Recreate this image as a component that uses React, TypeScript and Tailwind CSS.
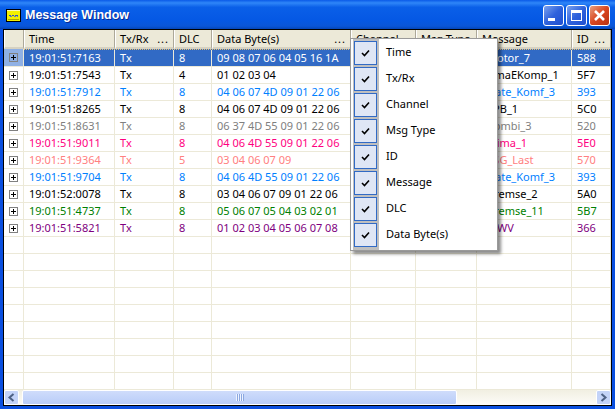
const rows = [
  ["19:01:51:7163", "8", "09 08 07 06 04 05 16 1A", "Motor_7", "588", "text-white", "pl-[10px]"],
  ["19:01:51:7543", "4", "01 02 03 04", "KlimaEKomp_1", "5F7", "text-black", "pl-[5px]"],
  ["19:01:51:7912", "8", "04 06 07 4D 09 01 22 06", "Gate_Komf_3", "393", "text-[#0080ff]", "pl-[10px]"],
  ["19:01:51:8265", "8", "04 06 07 4D 09 01 22 06", "EPB_1", "5C0", "text-black", "pl-[10px]"],
  ["19:01:51:8631", "8", "06 37 4D 55 09 01 22 06", "Kombi_3", "520", "text-[#808080]", "pl-[10px]"],
  ["19:01:51:9011", "8", "04 06 4D 55 09 01 22 06", "Klima_1", "5E0", "text-[#ff0080]", "pl-[10px]"],
  ["19:01:51:9364", "5", "03 04 06 07 09", "NSG_Last", "570", "text-[#ff8080]", "pl-[8px]"],
  ["19:01:51:9704", "8", "04 06 4D 55 09 01 22 06", "Gate_Komf_3", "393", "text-[#0080ff]", "pl-[10px]"],
  ["19:01:52:0078", "8", "03 04 06 07 09 01 22 06", "Bremse_2", "5A0", "text-black", "pl-[10px]"],
  ["19:01:51:4737", "8", "05 06 07 05 04 03 02 01", "Bremse_11", "5B7", "text-[#008000]", "pl-[10px]"],
  ["19:01:51:5821", "8", "01 02 03 04 05 06 07 08", "MWV", "366", "text-[#800080]", "pl-[10px]"],
];

const blanks = [0, 1, 2, 3, 4, 5, 6, 7, 8];
const menu = ["Time", "Tx/Rx", "Channel", "Msg Type", "ID", "Message", "DLC", "Data Byte(s)"];

function Head({ w, label, dots }: { w: string; label: string; dots?: boolean }) {
  return (
    <div className={`${w} shrink-0 flex items-center justify-between pl-[4px] pr-[4px] pt-[1px] h-full border-r border-r-[#aca899] border-l border-l-white border-b-2 border-b-[#d6d2c2] truncate`}>
      <span>{label}</span>
      {dots && <span className="tracking-[1px]">...</span>}
    </div>
  );
}

function Cell({ w, text, pad }: { w: string; text?: string; pad?: string }) {
  return (
    <div className={`${w} shrink-0 ${pad ?? "pl-[5px]"} h-full leading-[16px] whitespace-nowrap overflow-hidden border-r border-[#ece9d8]`}>
      {text}
    </div>
  );
}

function Plus({ selected }: { selected: boolean }) {
  return (
    <div className={`w-[20px] shrink-0 h-full flex items-center justify-center border-r border-[#ece9d8] ${selected ? "bg-[#8fb0e4]" : ""}`}>
      <svg width="9" height="9" viewBox="0 0 9 9" shapeRendering="crispEdges">
        <rect x="0.5" y="0.5" width="8" height="8" fill="none" stroke="#808080" />
        <path d="M2 4.5H7M4.5 2V7" stroke="#000" />
      </svg>
    </div>
  );
}

function WinButton({ kind }: { kind: "min" | "max" | "close" }) {
  const bg =
    kind === "close"
      ? "bg-[linear-gradient(135deg,#e8a080,#d9461f_50%,#b93210)]"
      : "bg-[linear-gradient(135deg,#7ba2ee,#2f62dc_50%,#1f4fd0)]";
  return (
    <div className={`w-[21px] h-[21px] rounded-[3px] border border-white flex items-center justify-center ${bg}`}>
      <svg width="15" height="15" viewBox="0 0 15 15" shapeRendering={kind === "close" ? "auto" : "crispEdges"}>
        {kind === "min" && <rect x="2" y="10" width="7" height="3" fill="#fff" />}
        {kind === "max" && (
          <>
            <rect x="2.5" y="2" width="10" height="10.5" fill="none" stroke="#fff" />
            <rect x="2" y="2" width="11" height="2.5" fill="#fff" />
          </>
        )}
        {kind === "close" && <path d="M3 3L12 12M12 3L3 12" stroke="#fff" strokeWidth="2.6" />}
      </svg>
    </div>
  );
}

function Arrow({ dir }: { dir: "l" | "r" }) {
  return (
    <div className="w-[15px] h-[15px] shrink-0 rounded-[2px] border border-white bg-[#c3d3f8] flex items-center justify-center">
      <svg width="9" height="9" viewBox="0 0 9 9">
        <path d={dir === "l" ? "M6.5 1L2.5 4.5L6.5 8" : "M2.5 1L6.5 4.5L2.5 8"} fill="none" stroke="#4d6185" strokeWidth="2" />
      </svg>
    </div>
  );
}

export default function App() {
  return (
    <div className="relative w-[615px] h-[409px] overflow-hidden flex flex-col bg-[#0a4fe0] text-[11px] text-black font-['Noto_Sans',sans-serif]">
      <div className="h-[29px] shrink-0 flex items-center pl-[6px] pr-[5px] pt-[2px] bg-[linear-gradient(180deg,#0a5ae8_0%,#2f86f8_10%,#0a5fe8_25%,#0558e4_70%,#0a56d8_90%,#0345b8_100%)]">
        <svg width="15" height="13" viewBox="0 0 15 13" shapeRendering="crispEdges" className="shrink-0">
          <rect x="0.5" y="0.5" width="14" height="12" rx="1" fill="#f4f000" stroke="#000" />
          <rect x="1" y="1" width="13" height="1" fill="#fffbb0" />
          <path d="M3 6h2M6 6h2M9 6h3" stroke="#3050c0" />
          <path d="M4 7h2M8 7h2M11 7h1" stroke="#5a7ad0" />
          <path d="M2 10h11" stroke="#b0a800" />
        </svg>
        <span className="ml-[4px] text-white font-bold text-[12.5px] font-['Liberation_Sans',sans-serif] [text-shadow:1px_1px_0_#0a2a90]">Message Window</span>
        <div className="ml-auto flex gap-[2px]">
          <WinButton kind="min" />
          <WinButton kind="max" />
          <WinButton kind="close" />
        </div>
      </div>

      <div className="flex-1 min-h-0 mx-[3px] mb-[3px] border border-black bg-white flex flex-col overflow-hidden">
        <div className="h-[19px] shrink-0 flex bg-[#ece9d8]">
          <Head w="w-[20px]" label="" />
          <Head w="w-[91px]" label="Time" />
          <Head w="w-[59px]" label="Tx/Rx" dots />
          <Head w="w-[38px]" label="DLC" />
          <Head w="w-[139px]" label="Data Byte(s)" dots />
          <Head w="w-[65px]" label="Channel" />
          <Head w="w-[61px]" label="Msg Type" />
          <Head w="w-[95px]" label="Message" />
          <Head w="w-[39px]" label="ID" dots />
        </div>
        <div className="flex-1 min-h-0 flex flex-col overflow-hidden">
          {rows.map((r, i) => (
            <div key={i} className={`${i === 0 ? "h-[18px]" : "h-[17px]"} shrink-0 flex border-b border-[#ece9d8] ${r[5]}`}>
              <Plus selected={i === 0} />
              <div className={`flex h-full ${i === 0 ? "bg-[#316ac5] border-t border-dotted border-t-[#e8c070]" : "bg-white"}`}>
                <Cell w="w-[91px]" text={r[0]} />
                <Cell w="w-[59px]" text="Tx" />
                <Cell w="w-[38px]" text={r[1]} />
                <Cell w="w-[139px]" text={r[2]} />
                <Cell w="w-[65px]" />
                <Cell w="w-[61px]" />
                <Cell w="w-[95px]" text={r[3]} pad={r[6]} />
                <Cell w="w-[39px]" text={r[4]} />
              </div>
            </div>
          ))}
          {blanks.map((b) => (
            <div key={b} className="h-[17px] shrink-0 flex border-b border-[#ece9d8]">
              <Cell w="w-[20px]" />
              <Cell w="w-[91px]" />
              <Cell w="w-[59px]" />
              <Cell w="w-[38px]" />
              <Cell w="w-[139px]" />
              <Cell w="w-[65px]" />
              <Cell w="w-[61px]" />
              <Cell w="w-[95px]" />
              <Cell w="w-[39px]" />
            </div>
          ))}
        </div>
        <div className="h-[15px] shrink-0 flex bg-[linear-gradient(180deg,#f1efe2,#fdfcf8)]">
          <Arrow dir="l" />
          <div className="ml-[3px] w-[435px] h-full rounded-[2px] border border-white bg-[linear-gradient(180deg,#cfdcfb,#b9cdf8)] flex items-center justify-center">
            <svg width="8" height="7" viewBox="0 0 8 7" shapeRendering="crispEdges">
              <path d="M0.5 0V7M2.5 0V7M4.5 0V7M6.5 0V7" stroke="#eef3ff" />
              <path d="M1.5 0V7M3.5 0V7M5.5 0V7M7.5 0V7" stroke="#8ca8e0" />
            </svg>
          </div>
          <div className="ml-auto">
            <Arrow dir="r" />
          </div>
        </div>
      </div>

      <div className="absolute left-[350px] top-[38px] w-[148px] h-[213px] bg-white border border-[#9a9a9a] shadow-[3px_3px_3px_rgba(0,0,0,0.45)] flex pl-[2px]">
        <div className="w-[26px] bg-[#bfbfbf] flex flex-col pt-[2px] pl-[1px]">
          {menu.map((m) => (
            <div key={m} className="w-[23px] h-[24px] mb-[2px] bg-[#dfe6f5] border border-[#316ac5] flex items-center justify-center">
              <svg width="9" height="8" viewBox="0 0 9 8">
                <path d="M1 4L3.5 6.5L8 1.5" fill="none" stroke="#000" strokeWidth="1.6" />
              </svg>
            </div>
          ))}
        </div>
        <div className="flex flex-col pl-[7px] pt-[2px]">
          {menu.map((m) => (
            <div key={m} className="h-[26px] leading-[22px] whitespace-nowrap">{m}</div>
          ))}
        </div>
      </div>
    </div>
  );
}
